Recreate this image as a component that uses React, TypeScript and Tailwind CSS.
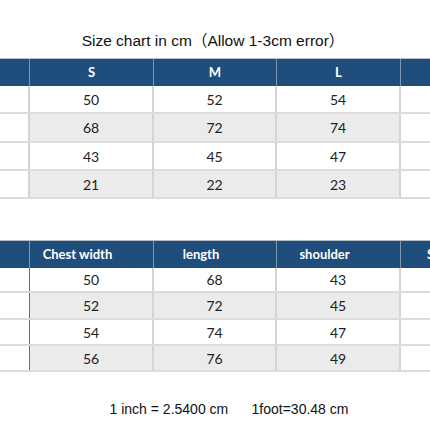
import React from "react";

const cols = ["w-[30px]", "w-[124px]", "w-[123px]", "w-[124px]", "w-[29px]"];

function Table({
  header,
  rows,
  rowH,
  darkLeft,
  shift,
}: {
  header: string[];
  rows: string[][];
  rowH: string[];
  darkLeft?: boolean;
  shift?: boolean;
}) {
  return (
    <div className="flex flex-col">
      <div className="flex h-[28px] bg-[#1f4d7c] border-t border-[#b7bec6]">
        {header.map((h, i) => (
          <div
            key={i}
            className={`${cols[i]} shrink-0 flex items-center text-white font-bold text-[13px] overflow-hidden whitespace-nowrap ${
              i < 4 ? "border-r border-[#7f96ad]" : ""
            } ${i === 4 ? "justify-start pl-[26px]" : "justify-center"} ${
              shift && i > 0 && i < 4 ? "pr-[28px]" : ""
            }`}
          >
            {h}
          </div>
        ))}
      </div>
      {rows.map((r, ri) => (
        <div
          key={ri}
          className={`flex ${rowH[ri]} border-b-2 border-[#dcdcdc]`}
        >
          {r.map((c, i) => (
            <div
              key={i}
              className={`${cols[i]} shrink-0 flex items-center justify-center text-[14px] text-[#222] ${
                ri % 2 === 1 && i >= 1 && i <= 3 ? "bg-[#ebebeb]" : "bg-white"
              } ${
                i === 0
                  ? darkLeft
                    ? "border-r border-[#6e6e6e]"
                    : "border-r-2 border-[#d4d4d4]"
                  : i < 4
                  ? "border-r-2 border-[#d4d4d4]"
                  : ""
              }`}
            >
              {c}
            </div>
          ))}
        </div>
      ))}
    </div>
  );
}

export default function App() {
  return (
    <div
      className="w-[430px] h-[430px] bg-white overflow-hidden flex flex-col"
      style={{ fontFamily: "Lato, 'Liberation Sans', sans-serif" }}
    >
      <div
        className="h-[58px] flex items-center justify-center pt-[24px] pr-[4px] text-[15.5px] text-[#111]"
        style={{ fontFamily: "'Liberation Sans', 'Noto Sans CJK SC', sans-serif" }}
      >
        Size chart in cm（Allow 1-3cm error）
      </div>
      <Table
        header={["", "S", "M", "L", ""]}
        rows={[
          ["", "50", "52", "54", ""],
          ["", "68", "72", "74", ""],
          ["", "43", "45", "47", ""],
          ["", "21", "22", "23", ""],
        ]}
        rowH={["h-[28px]", "h-[29px]", "h-[28px]", "h-[28px]"]}
      />
      <div className="h-[41px]" />
      <Table
        header={["", "Chest width", "length", "shoulder", "Sleeve"]}
        rows={[
          ["", "50", "68", "43", ""],
          ["", "52", "72", "45", ""],
          ["", "54", "74", "47", ""],
          ["", "56", "76", "49", ""],
        ]}
        rowH={["h-[25px]", "h-[27px]", "h-[26px]", "h-[26px]"]}
        darkLeft
        shift
      />
      <div
        className="flex-1 flex items-center justify-center pt-[16px] pl-[28px] text-[14px] text-[#111] whitespace-pre"
        style={{ fontFamily: "'Liberation Sans', sans-serif" }}
      >
        {"1 inch = 2.5400 cm      1foot=30.48 cm"}
      </div>
    </div>
  );
}
